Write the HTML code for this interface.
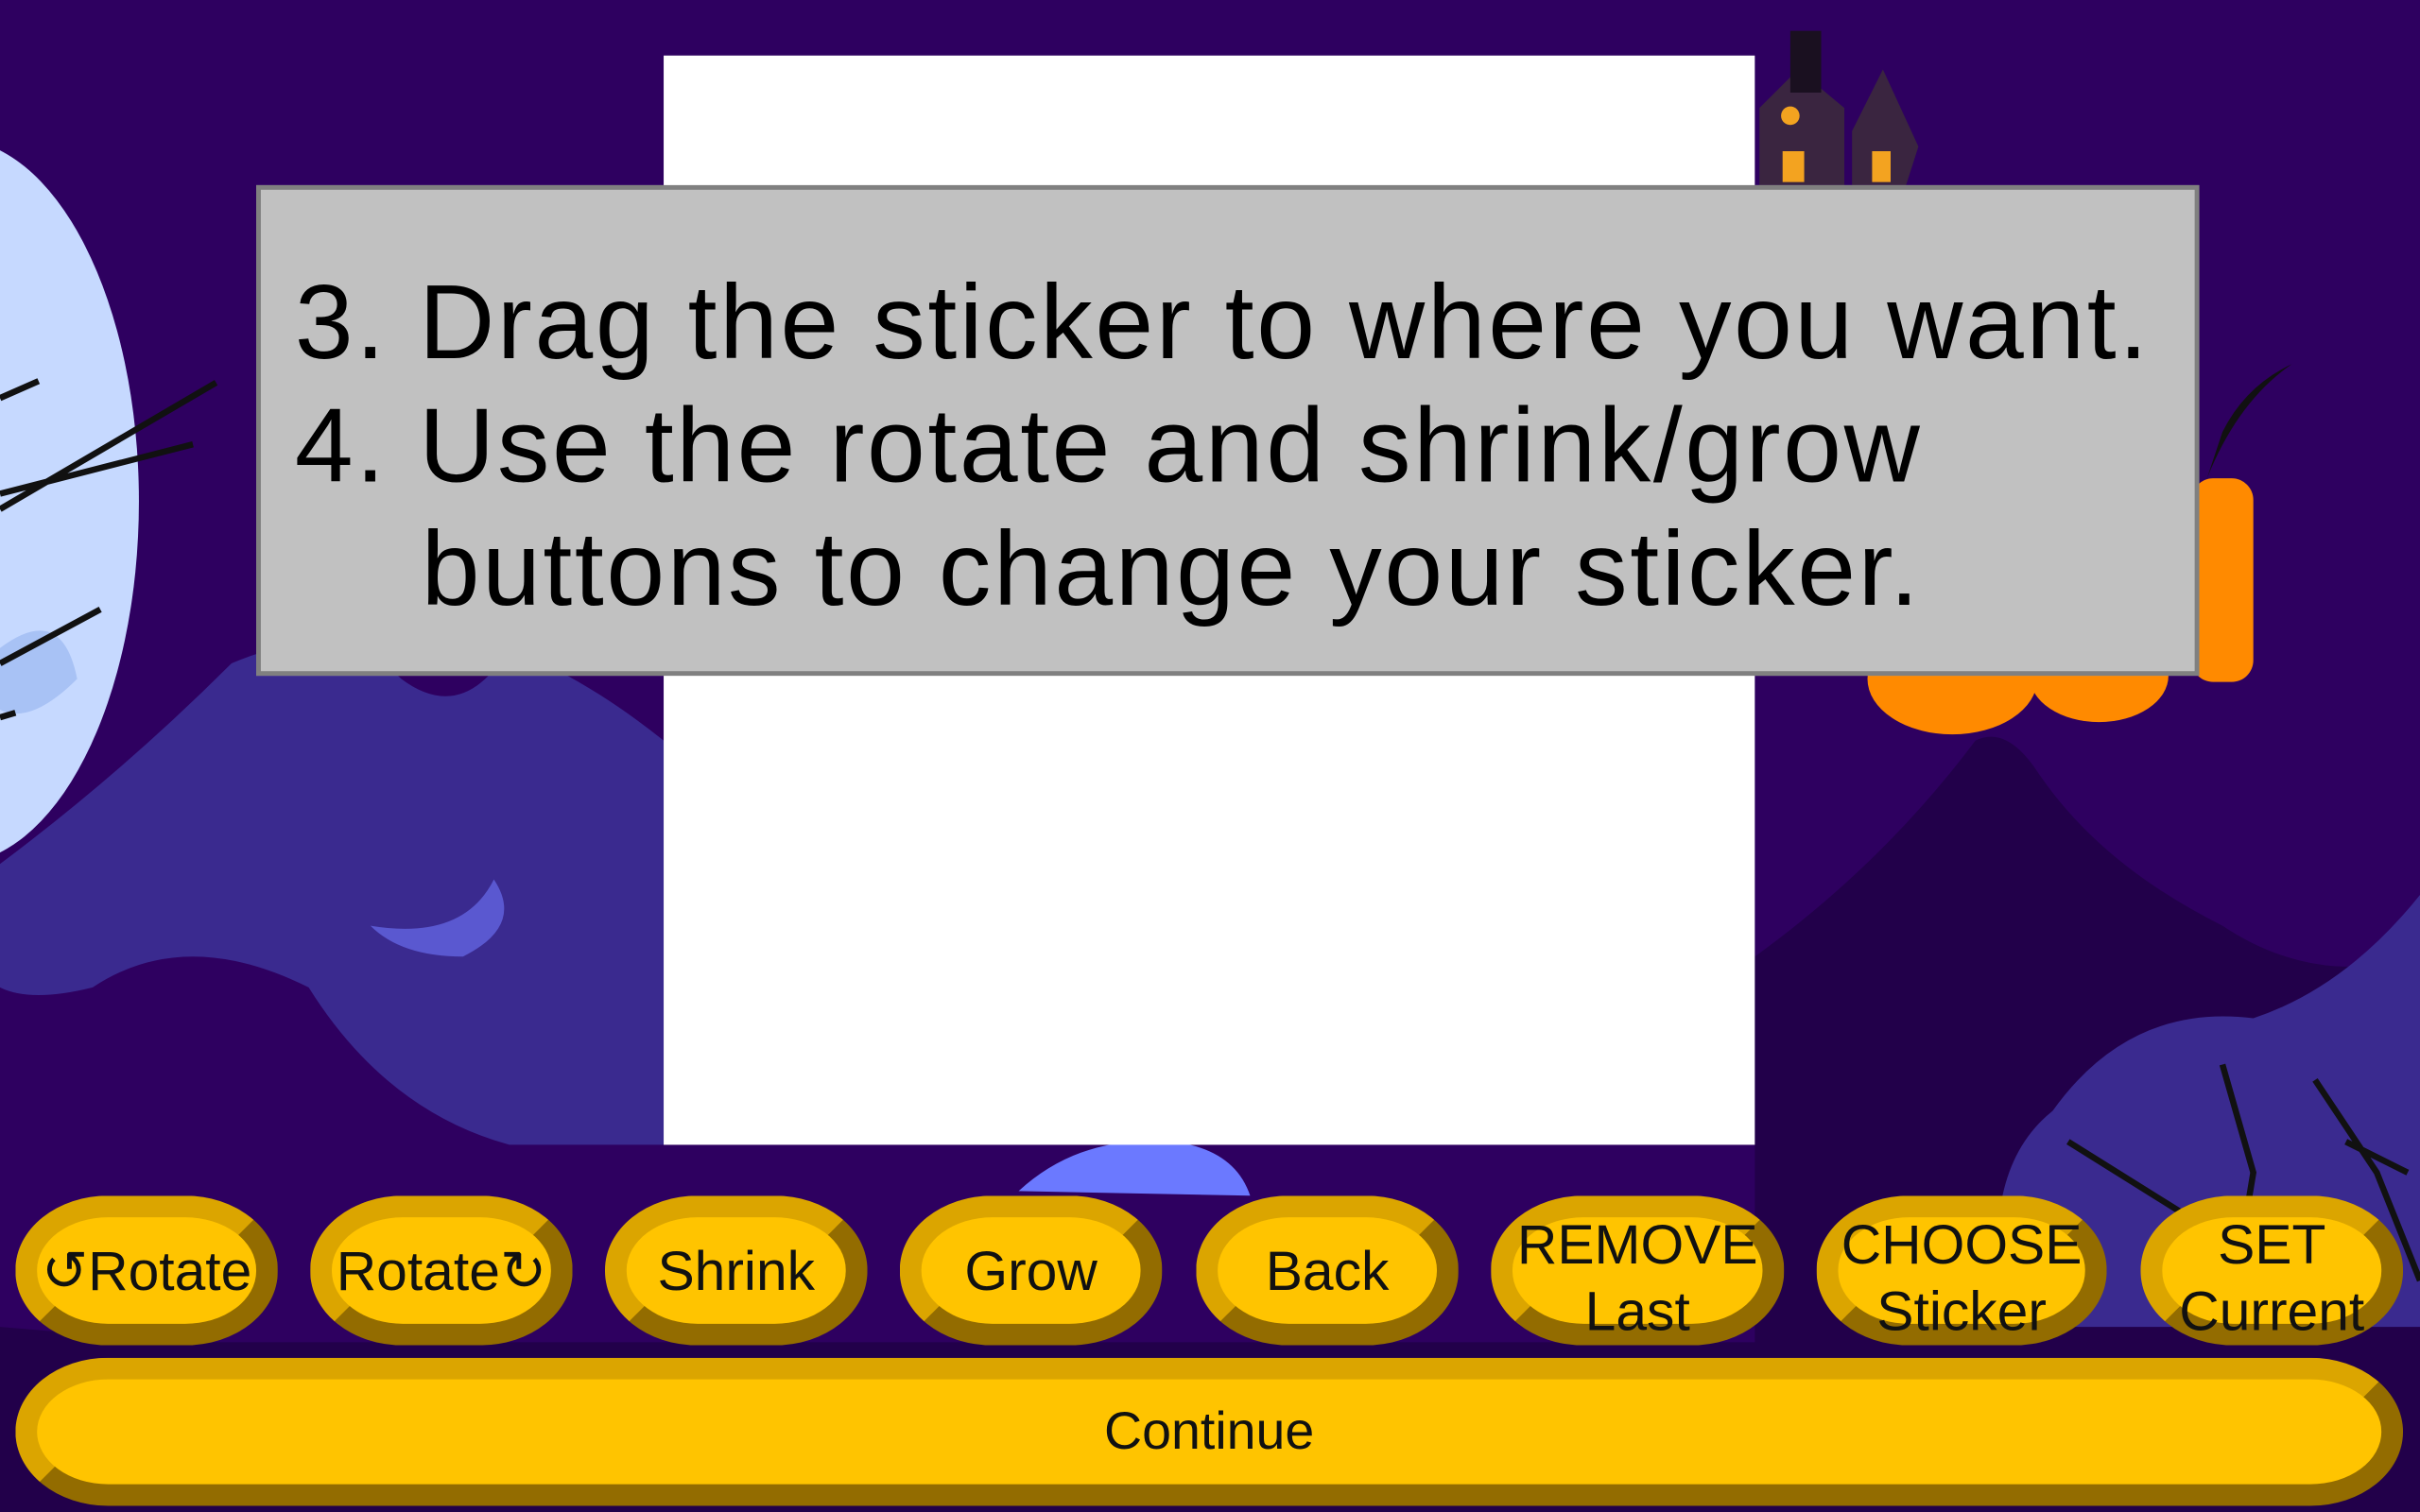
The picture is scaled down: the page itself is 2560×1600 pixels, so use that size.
<!DOCTYPE html>
<html><head><meta charset="utf-8"><style>
html,body{margin:0;padding:0;width:2560px;height:1600px;overflow:hidden;background:#2e0060;}
#s{position:absolute;left:0;top:0;width:1568px;height:980px;transform:scale(1.632653);transform-origin:0 0;font-family:"Liberation Sans",Arial,sans-serif;}
.a{position:absolute;}
.btn{position:absolute;top:775px;height:97px;box-sizing:border-box;border:14px solid;border-color:#dba500 #936c00 #936c00 #dba500;border-radius:60px/48px;background:#ffc400;display:flex;align-items:center;justify-content:center;text-align:center;font-size:36px;line-height:43px;color:#111;white-space:nowrap;}
.two{padding-top:8px;}
</style></head><body><div id="s">
<svg class="a" style="left:0;top:0" width="1568" height="980">
 <path d="M0 560 Q80 500 150 430 Q220 400 260 440 Q300 470 330 420 Q380 440 430 480 L430 742 L330 742 Q250 720 200 640 Q120 600 60 640 Q20 650 0 640Z" fill="#3a2a8f"/>
 <ellipse cx="-30" cy="325" rx="120" ry="235" fill="#c6d9ff"/>
 <path d="M0 420 Q40 390 50 440 Q20 470 0 460Z" fill="#a8c2f5"/>
 <path d="M0 330 L140 248 M0 320 L125 288 M0 430 L65 395 M0 258 L25 247 M0 465 L10 462" stroke="#111" stroke-width="4"/>
 <path d="M240 600 Q300 610 320 570 Q340 600 300 620 Q260 620 240 600Z" fill="#5a58d0"/>
 <path d="M1137 620 Q1220 560 1280 480 Q1300 470 1320 500 Q1360 560 1440 600 Q1500 640 1568 620 L1568 980 L1137 980Z" fill="#22004a"/>
 <path d="M1330 720 Q1380 650 1460 660 Q1520 640 1568 580 L1568 860 L1300 860 Q1280 760 1330 720Z" fill="#3a2a8f"/>
 <path d="M1340 740 L1420 790 M1440 690 L1460 760 L1450 820 M1500 700 L1540 760 L1568 830 M1520 740 L1560 760" stroke="#111" stroke-width="4" fill="none"/>
 <path d="M660 772 Q700 735 760 740 Q800 745 810 775Z" fill="#6b79ff"/>
 <ellipse cx="1265" cy="440" rx="55" ry="36" fill="#ff8a00"/>
 <ellipse cx="1360" cy="438" rx="45" ry="30" fill="#ff8a00"/>
 <rect x="1420" y="310" width="40" height="132" rx="14" fill="#ff8a00"/>
 <path d="M1430 310 Q1450 260 1485 236 Q1455 250 1440 280Z" fill="#111"/>
 <path d="M1140 120 L1140 70 L1165 45 L1195 70 L1195 120Z" fill="#3a2540"/>
 <rect x="1160" y="20" width="20" height="40" fill="#1a1020"/>
 <path d="M1200 120 L1200 85 L1220 45 L1243 95 L1235 120Z" fill="#3a2540"/>
 <circle cx="1160" cy="75" r="6" fill="#f3a320"/>
 <rect x="1155" y="98" width="14" height="20" fill="#f3a320"/>
 <rect x="1213" y="98" width="12" height="20" fill="#f3a320"/>
 <path d="M0 860 L120 870 L1568 870 L1568 980 L0 980Z" fill="#22004a"/>
</svg>
<div class="a" style="left:430px;top:36px;width:707px;height:706px;background:#fff"></div>
<div class="a" style="left:166px;top:120px;width:1259px;height:318px;box-sizing:border-box;background:#c1c1c1;border:3px solid #808080;font-size:68px;line-height:80px;letter-spacing:1.6px;color:#000;padding:46px 0 0 22px;">
<div>3. Drag the sticker to where you want.</div>
<div>4. Use the rotate and shrink/grow</div>
<div style="padding-left:82px">buttons to change your sticker.</div>
</div>
<div class="btn" style="left:10px;width:170px">↺Rotate</div>
<div class="btn" style="left:201px;width:170px">Rotate↻</div>
<div class="btn" style="left:392px;width:170px">Shrink</div>
<div class="btn" style="left:583px;width:170px">Grow</div>
<div class="btn" style="left:775px;width:170px">Back</div>
<div class="btn two" style="left:966px;width:190px">REMOVE<br>Last</div>
<div class="btn two" style="left:1177px;width:188px">CHOOSE<br>Sticker</div>
<div class="btn two" style="left:1387px;width:170px">SET<br>Current</div>
<div class="btn" style="left:10px;top:880px;width:1547px;height:96px;font-size:34px">Continue</div>
</div></body></html>
